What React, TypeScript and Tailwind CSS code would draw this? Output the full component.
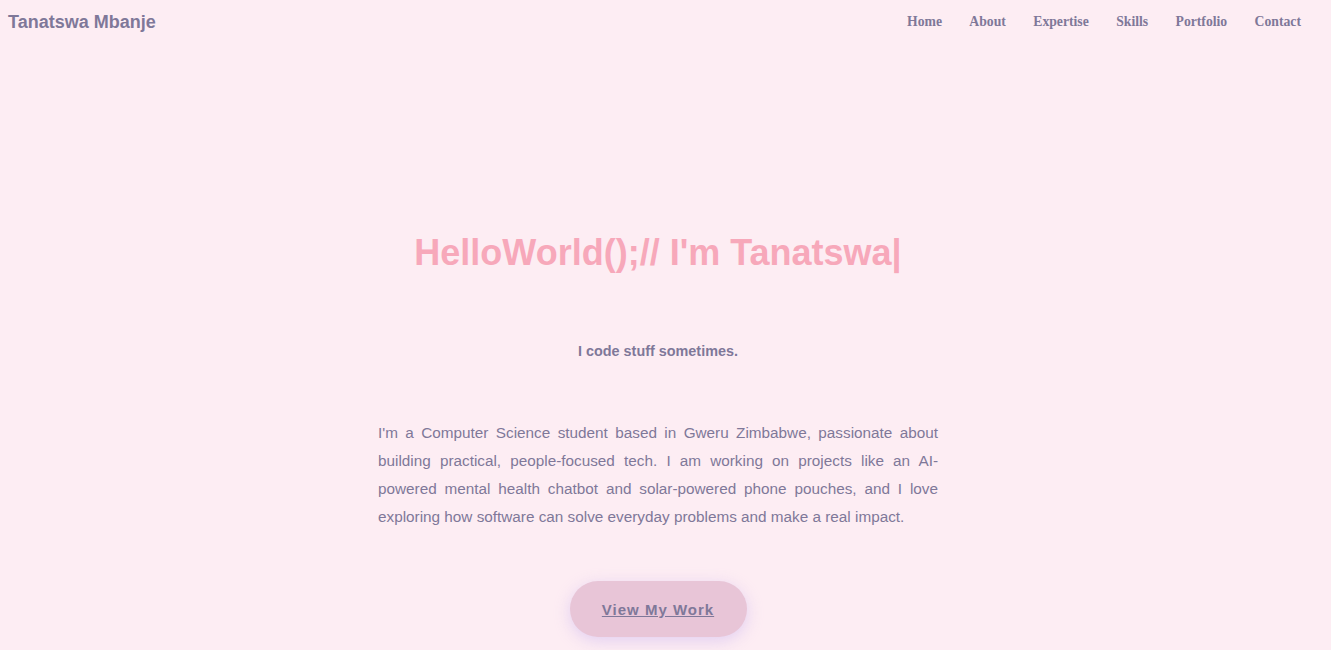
export default function App() {
  const links = ['Home', 'About', 'Expertise', 'Skills', 'Portfolio', 'Contact'];

  return (
    <div className="min-h-screen bg-[#fdedf3] font-['Liberation_Sans',Arial,sans-serif] text-[#7f7899]">
      <nav className="flex h-[44px] items-center justify-between pl-[8px] pr-[30px] pt-[1px]">
        <a className="text-[18px] font-bold text-[#7f7899]">Tanatswa Mbanje</a>
        <ul className="flex items-center gap-[27.4px] font-['Liberation_Serif',serif] text-[13.7px] font-bold">
          {links.map((l) => (
            <li key={l}>
              <a className="text-[#7f7899]">{l}</a>
            </li>
          ))}
        </ul>
      </nav>

      <main className="flex flex-col items-center pr-[15px] text-center">
        <h1 className="mt-[186.5px] text-[36px] leading-[43px] font-bold text-[#f7a8ba]">
          HelloWorld();// I'm Tanatswa|
        </h1>
        <p className="mt-[69px] text-[14.4px] leading-[17px] font-bold">I code stuff sometimes.</p>
        <p className="mt-[59.5px] w-[560px] text-justify text-[15.3px] leading-[28px]">
          I'm a Computer Science student based in Gweru Zimbabwe, passionate about building practical,
          people-focused tech. I am working on projects like an AI-powered mental health chatbot and
          solar-powered phone pouches, and I love exploring how software can solve everyday problems and
          make a real impact.
        </p>
        <a className="mt-[50px] flex h-[56px] w-[177px] items-center justify-center rounded-[28px] bg-[#e8c5d7] pt-[2px] text-[15px] font-bold tracking-[1px] text-[#7f7899] underline shadow-[0_4px_16px_rgba(196,170,240,0.45)]">
          View My Work
        </a>
      </main>
    </div>
  );
}
